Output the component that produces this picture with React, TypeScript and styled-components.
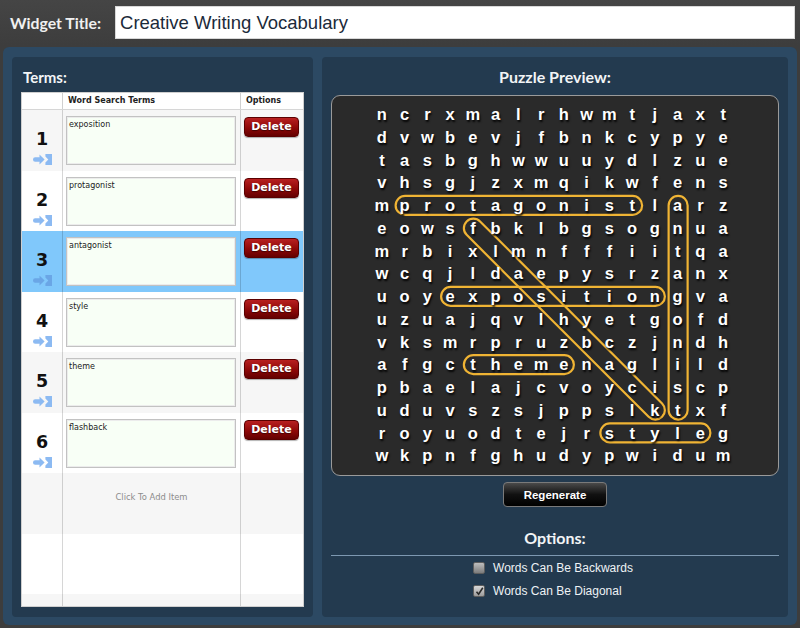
import React from 'react';
import styled, { createGlobalStyle } from 'styled-components';

const GlobalStyle = createGlobalStyle`
  html, body { margin: 0; padding: 0; background: #3d3d3d; }
  body { width: 800px; height: 628px; overflow: hidden; font-family: "DejaVu Sans", sans-serif; }
  * { box-sizing: border-box; }
`;

const Page = styled.div`
  width: 800px;
  height: 628px;
  display: flex;
  flex-direction: column;
  background: #3d3d3d;
`;

const TopBar = styled.header`
  height: 45px;
  flex-shrink: 0;
  display: flex;
  align-items: center;
  gap: 14px;
  padding: 0 5px 0 10px;
  background: linear-gradient(#454545, #3d3d3d);
`;

const TitleLabel = styled.label`
  font-family: Lato, "Open Sans", sans-serif;
  font-weight: 700;
  font-size: 15.8px;
  color: #f0f0f0;
  white-space: nowrap;
`;

const TitleInput = styled.input`
  flex: 1;
  height: 33px;
  border: 1px solid #d8d8d8;
  background: #fff;
  padding: 0 4px;
  font-family: "Liberation Sans", Arial, sans-serif;
  font-size: 18.5px;
  color: #1b2a3a;
  outline: none;
`;

const Main = styled.main`
  flex: 1;
  min-height: 0;
  margin: 2px 3px 3px;
  background: #2c4963;
  border-radius: 6px;
  padding: 10px 9px 8px;
  display: grid;
  grid-template-columns: 301px 1fr;
  gap: 9px;
`;

const Panel = styled.section`
  background: #233a4f;
  border-radius: 4px;
  display: flex;
  flex-direction: column;
  padding: 10px 9px;
  min-height: 0;
`;

const PanelHeading = styled.h2<{ $center?: boolean; $gap?: number; $size?: number }>`
  margin: 0 0 ${p => p.$gap ?? 5}px;
  padding-left: ${p => (p.$center ? 0 : 2)}px;
  font-family: Lato, "Open Sans", sans-serif;
  font-weight: 700;
  font-size: ${p => p.$size ?? 15}px;
  line-height: 20px;
  color: #f2f4f6;
  text-align: ${p => (p.$center ? 'center' : 'left')};
`;

const COLS = '41px 178px 1fr';

const Table = styled.div`
  flex: 1;
  min-height: 0;
  background: #fff;
  border: 1px solid #cfcfcf;
  overflow: hidden;
  display: flex;
  flex-direction: column;
`;

const HeaderRow = styled.div`
  display: grid;
  grid-template-columns: ${COLS};
  height: 17px;
  flex-shrink: 0;
  border-bottom: 1px solid #d6d6d6;
  background: #fff;
`;

const HeaderCell = styled.div`
  padding-left: 5px;
  font-family: "DejaVu Sans", sans-serif;
  font-weight: 700;
  font-size: 8px;
  line-height: 16px;
  color: #222;
  &:not(:last-child) { border-right: 1px solid #d0d0d0; }
`;

type Tone = 'gray' | 'white' | 'selected';
const toneBg: Record<Tone, string> = {
  gray: '#f6f6f6',
  white: '#ffffff',
  selected: '#80c8fb',
};

const Row = styled.div<{ $tone: Tone }>`
  display: grid;
  grid-template-columns: ${COLS};
  height: 60.5px;
  flex-shrink: 0;
  background: ${p => toneBg[p.$tone]};
`;

const Cell = styled.div`
  display: flex;
  flex-direction: column;
  &:not(:last-child) { border-right: 1px solid rgba(0, 0, 0, 0.16); }
`;

const NumCell = styled(Cell)`
  align-items: center;
  padding-top: 21px;
`;

const RowNumber = styled.div`
  font-family: "DejaVu Sans", sans-serif;
  font-weight: 700;
  font-size: 17.5px;
  line-height: 16px;
  color: #111;
`;

const ArrowIcon = styled.svg`
  margin-top: 7px;
  margin-left: 1px;
`;

const TermBox = styled.textarea`
  display: block;
  width: 170px;
  height: 49px;
  margin: 6px 0 0 3px;
  resize: none;
  border: 1px solid #c2c2c2;
  box-shadow: inset 0 0 0 1px #ececec;
  background: #f8fff6;
  font-family: "DejaVu Sans", sans-serif;
  font-size: 8px;
  line-height: 10px;
  color: #222;
  padding: 3px 2px;
  outline: none;
  overflow: hidden;
`;

const DeleteButton = styled.button`
  width: 55px;
  height: 20px;
  margin: 7px 0 0 3px;
  padding: 0;
  border: 1px solid #5a0000;
  border-radius: 4px;
  background: linear-gradient(#b82020, #8e0808 55%, #640000);
  box-shadow: 0 1px 1px rgba(0, 0, 0, 0.3);
  color: #fff;
  font-family: "DejaVu Sans", sans-serif;
  font-weight: 700;
  font-size: 11px;
  line-height: 18px;
  text-shadow: 0 1px 1px rgba(0, 0, 0, 0.5);
  cursor: pointer;
`;

const AddText = styled.div`
  padding-top: 19px;
  text-align: center;
  font-family: "DejaVu Sans", sans-serif;
  font-size: 8.4px;
  color: #8c8c8c;
`;

const PuzzleBox = styled.div`
  height: 381px;
  flex-shrink: 0;
  background: #2a2a2a;
  border: 1px solid #9a9a9a;
  border-radius: 9px;
  display: flex;
  justify-content: center;
  padding: 7px 5px 0 0;
`;

const CELL = 22.75;

const GridWrap = styled.div`
  position: relative;
  width: ${CELL * 16}px;
  height: ${CELL * 16}px;
`;

const Highlights = styled.svg`
  position: absolute;
  left: 0;
  top: 0;
  z-index: 0;
`;

const LetterGrid = styled.div`
  position: relative;
  z-index: 1;
  display: grid;
  grid-template-columns: repeat(16, ${CELL}px);
  grid-auto-rows: ${CELL}px;
`;

const Letter = styled.span`
  text-align: center;
  font-family: "Liberation Sans", Arial, sans-serif;
  font-weight: 700;
  font-size: 16.5px;
  line-height: ${CELL}px;
  color: #ffffff;
  text-shadow: 1px 2px 2px rgba(0, 0, 0, 0.95);
`;

const RegenButton = styled.button`
  align-self: center;
  width: 104px;
  height: 25px;
  margin-top: 6px;
  padding: 0;
  border: 1px solid #7a7a7a;
  border-radius: 4px;
  background: linear-gradient(#4a4a4a, #111 50%, #000);
  color: #fff;
  font-family: "Liberation Sans", Arial, sans-serif;
  font-weight: 700;
  font-size: 11.5px;
  cursor: pointer;
`;

const OptionsHeading = styled.h3`
  margin: 21px 0 0;
  text-align: center;
  font-family: Lato, "Open Sans", sans-serif;
  font-weight: 700;
  font-size: 16px;
  line-height: 20px;
  color: #f2f4f6;
`;

const Divider = styled.div`
  height: 1px;
  margin-top: 7px;
  background: #7d98b1;
`;

const CheckList = styled.div`
  align-self: center;
  display: flex;
  flex-direction: column;
  align-items: flex-start;
  gap: 3px;
  padding-top: 2px;
  padding-right: 4px;
`;

const CheckRow = styled.label`
  display: flex;
  align-items: center;
  gap: 8px;
  font-family: "Liberation Sans", Arial, sans-serif;
  font-size: 12px;
  line-height: 20px;
  color: #eef2f5;
`;

const CheckBox = styled.span<{ $checked?: boolean }>`
  width: 12px;
  height: 12px;
  display: flex;
  align-items: center;
  justify-content: center;
  border: 1px solid #5e5e5e;
  border-radius: 2px;
  background: ${p => (p.$checked ? 'linear-gradient(#d8d8d8, #9c9c9c)' : 'linear-gradient(#bdbdbd, #7c7c7c)')};
`;

const GRID = [
  'ncrxmalrhwmtjaxt',
  'dvwbevjfbnkcypye',
  'tasbghwwuuydlzue',
  'vhsgjzxmqikwfens',
  'mprotagonistlarz',
  'eowsfbklbgsognua',
  'mrbixlmnfffiitqa',
  'wcqjldaepysrzanx',
  'uoyexpositiongva',
  'uzuajqvlhyetgofd',
  'vksmrpruzbczjndh',
  'afgcthemenaglild',
  'pbaelajcvoyciscp',
  'uduvszsjppslktxf',
  'royuodtejrstyleg',
  'wkpnfghudypwidum',
];

const WORDS = ['exposition', 'protagonist', 'antagonist', 'style', 'theme', 'flashback'];

// pills: [col1,row1,col2,row2] zero-indexed
const PILLS: [number, number, number, number][] = [
  [1, 4, 11, 4],
  [13, 4, 13, 13],
  [3, 8, 12, 8],
  [4, 11, 8, 11],
  [10, 14, 14, 14],
  [4, 5, 12, 13],
];

const Arrow = ({ color }: { color: string }) => (
  <ArrowIcon width="19" height="11" viewBox="0 0 19 11">
    <rect x="0" y="3.3" width="8.5" height="4.4" rx="2.2" fill={color} />
    <polygon points="6.5,0.6 11.6,5.5 6.5,10.4" fill={color} />
    <path d="M12.4 0 H19 V11 H12.4 V8.4 L15.3 5.5 L12.4 2.6 Z" fill={color} />
  </ArrowIcon>
);

const Pill = ({ c1, r1, c2, r2 }: { c1: number; r1: number; c2: number; r2: number }) => {
  const x1 = CELL * c1 + CELL / 2;
  const y1 = CELL * r1 + CELL / 2;
  const x2 = CELL * c2 + CELL / 2;
  const y2 = CELL * r2 + CELL / 2;
  const dx = x2 - x1;
  const dy = y2 - y1;
  const len = Math.sqrt(dx * dx + dy * dy);
  const ang = (Math.atan2(dy, dx) * 180) / Math.PI;
  const h = 9.5;
  return (
    <rect
      x={-len / 2 - h}
      y={-h}
      width={len + 2 * h}
      height={2 * h}
      rx={h}
      fill="none"
      stroke="#f0b434"
      strokeWidth="2.2"
      transform={`translate(${(x1 + x2) / 2} ${(y1 + y2) / 2}) rotate(${ang})`}
    />
  );
};

export default function App() {
  return (
    <Page>
      <GlobalStyle />
      <TopBar>
        <TitleLabel>Widget Title:</TitleLabel>
        <TitleInput defaultValue="Creative Writing Vocabulary" />
      </TopBar>
      <Main>
        <Panel>
          <PanelHeading>Terms:</PanelHeading>
          <Table>
            <HeaderRow>
              <HeaderCell />
              <HeaderCell>Word Search Terms</HeaderCell>
              <HeaderCell>Options</HeaderCell>
            </HeaderRow>
            {WORDS.map((w, i) => {
              const tone: Tone = i === 2 ? 'selected' : i % 2 === 0 ? 'gray' : 'white';
              return (
                <Row key={w} $tone={tone}>
                  <NumCell>
                    <RowNumber>{i + 1}</RowNumber>
                    <Arrow color={tone === 'selected' ? '#6aa6e6' : '#8cbaf2'} />
                  </NumCell>
                  <Cell>
                    <TermBox readOnly value={w} />
                  </Cell>
                  <Cell>
                    <DeleteButton>Delete</DeleteButton>
                  </Cell>
                </Row>
              );
            })}
            <Row $tone="gray">
              <Cell />
              <Cell>
                <AddText>Click To Add Item</AddText>
              </Cell>
              <Cell />
            </Row>
            <Row $tone="white">
              <Cell />
              <Cell />
              <Cell />
            </Row>
            <Row $tone="gray">
              <Cell />
              <Cell />
              <Cell />
            </Row>
          </Table>
        </Panel>
        <Panel>
          <PanelHeading $center $gap={8} $size={16}>Puzzle Preview:</PanelHeading>
          <PuzzleBox>
            <GridWrap>
              <Highlights width={CELL * 16} height={CELL * 16} viewBox={`0 0 ${CELL * 16} ${CELL * 16}`}>
                {PILLS.map(([c1, r1, c2, r2], i) => (
                  <Pill key={i} c1={c1} r1={r1} c2={c2} r2={r2} />
                ))}
              </Highlights>
              <LetterGrid>
                {GRID.map((row, r) =>
                  row.split('').map((ch, c) => <Letter key={`${r}-${c}`}>{ch}</Letter>)
                )}
              </LetterGrid>
            </GridWrap>
          </PuzzleBox>
          <RegenButton>Regenerate</RegenButton>
          <OptionsHeading>Options:</OptionsHeading>
          <Divider />
          <CheckList>
            <CheckRow>
              <CheckBox />
              Words Can Be Backwards
            </CheckRow>
            <CheckRow>
              <CheckBox $checked>
                <svg width="9" height="9" viewBox="0 0 9 9">
                  <path d="M1.5 4.8 L3.6 7.2 L7.8 0.8" fill="none" stroke="#2a2a2a" strokeWidth="1.6" />
                </svg>
              </CheckBox>
              Words Can Be Diagonal
            </CheckRow>
          </CheckList>
        </Panel>
      </Main>
    </Page>
  );
}
